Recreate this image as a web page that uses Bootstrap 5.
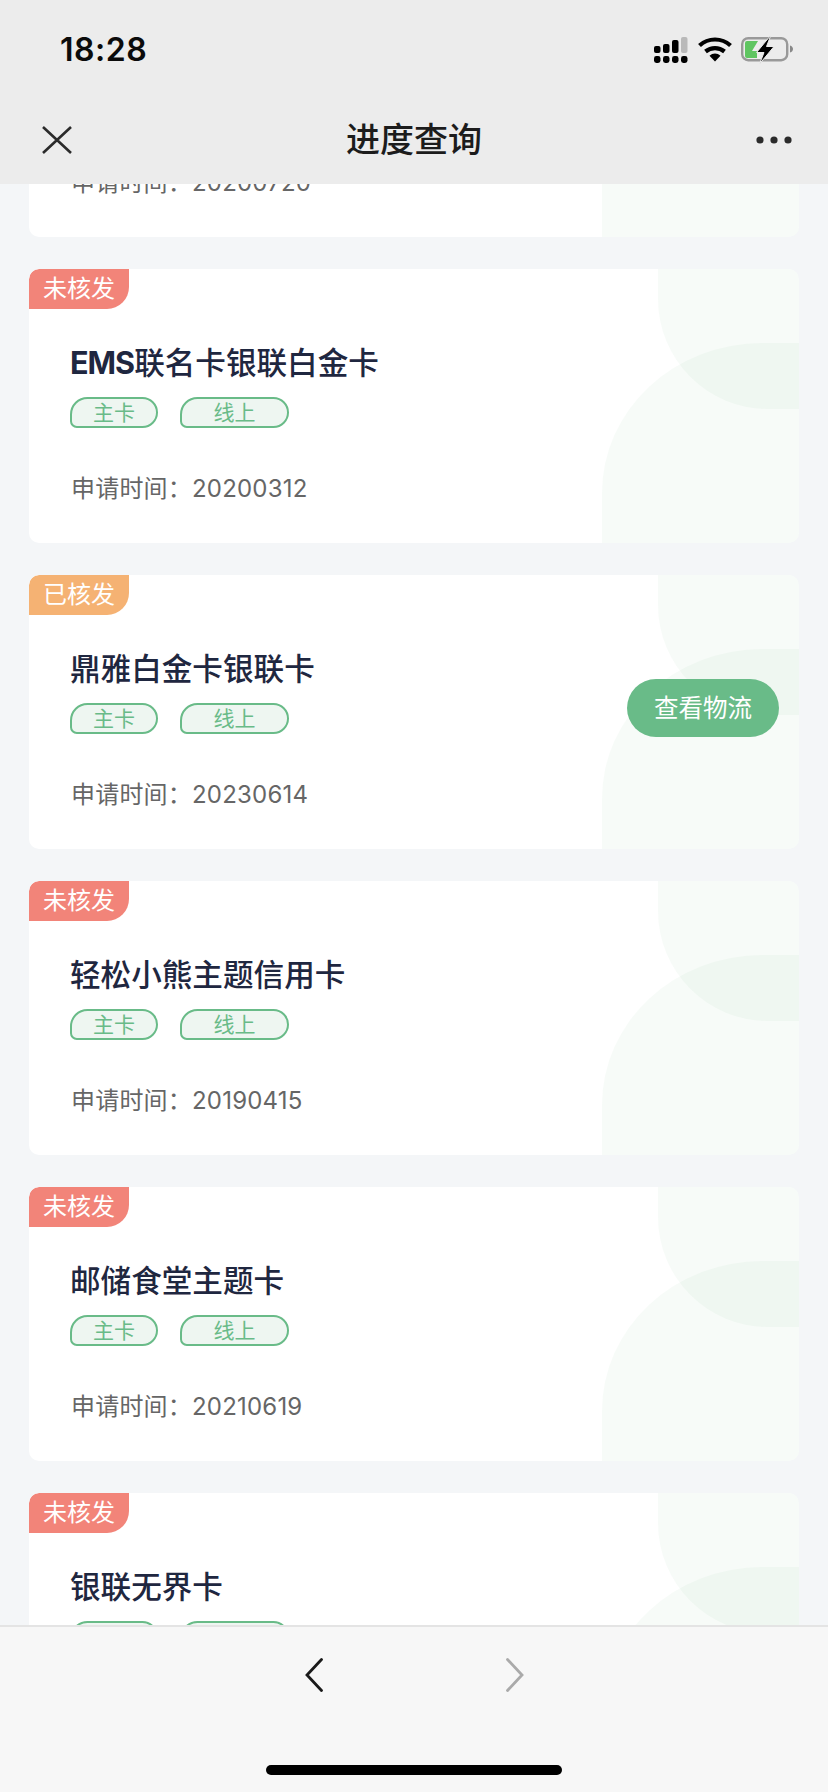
<!DOCTYPE html>
<html lang="zh-CN">
<head>
  <meta charset="UTF-8" />
  <meta name="viewport" content="width=device-width, initial-scale=1" />
  <title>进度查询</title>
  <link href="https://cdn.jsdelivr.net/npm/bootstrap@5.3.2/dist/css/bootstrap.min.css" rel="stylesheet" />
  <style>
    html, body { height: 100%; }
    body {
      font-family: Inter, "Noto Sans CJK SC", sans-serif;
      background-color: #f4f6f8;
      overflow: hidden;
    }
    .phone-page { width: 828px; height: 1792px; }
    .top-head { background-color: #ececec; height: 184px; flex: none; position: relative; z-index: 2; }
    .status-row { height: 100px; padding: 0 34px 0 60px; }
    .status-time { font-size: 32px; font-weight: 600; color: #0b0b0b; letter-spacing: .5px; margin-top: -1px; }
    .nav-row { height: 84px; padding: 0 36px 4px 42px; }
    .nav-title { font-size: 34px; font-weight: 500; color: #1c1c1c; line-height: 1; }
    .scroll-area { min-height: 0; overflow: hidden; }
    .card-list { margin: -221px 29px 0; gap: 32px; }
    .apply-card {
      height: 274px; flex: none;
      border: 0; border-radius: 10px;
      overflow: hidden;
    }
    .apply-card::before, .apply-card::after {
      content: ""; position: absolute; right: 0;
      background-color: rgba(105, 187, 136, .055);
    }
    .apply-card::before { top: 0; width: 141px; height: 140px; border-bottom-left-radius: 110px; }
    .apply-card::after { bottom: 0; width: 197px; height: 200px; border-top-left-radius: 160px 150px; }
    .state-tag {
      width: 100px; height: 40px; z-index: 1;
      font-size: 24px; line-height: 40px; text-align: center; color: #fff;
      border-radius: 10px 0 22px 0;
    }
    .state-no { background-color: #f28479; }
    .state-yes { background-color: #f5b273; }
    .apply-body { height: 100%; padding: 0 20px 8px 41px; position: relative; z-index: 1; }
    .apply-info { padding-top: 44px; }
    .apply-name { font-size: 30.6px; font-weight: 500; line-height: 40px; color: #1f2740; margin: 0 0 14px; }
    .apply-name b { font-weight: 700; letter-spacing: -1px; }
    .type-tag {
      height: 31px; font-size: 21px; line-height: 27px; color: #69bb88;
      background-color: #eef6f1; border: 2px solid #69bb88;
      border-radius: 18px 16px 16px 7px;
    }
    .type-main { width: 88px; text-align: center; }
    .type-online { width: 109px; text-align: center; margin-left: 22px; }
    .apply-date { font-size: 24px; line-height: 32px; color: #666; margin: 45px 0 0 1px; letter-spacing: .2px; }
    .btn-track {
      width: 152px; height: 58px; padding: 0;
      border: 0; border-radius: 29px;
      background-color: #69bb88; color: #fff;
      font-size: 24.5px; line-height: 58px; flex: none;
    }
    .foot-bar { height: 167px; flex: none; background-color: #f7f7f7; border-top: 2px solid #e4e4e4; position: relative; z-index: 2; }
    .foot-nav { padding-top: 31px; gap: 183px; }
    .home-line { width: 296px; height: 10px; border-radius: 5px; background-color: #000; margin: 73px auto 0; }
  </style>
</head>
<body>
<div class="phone-page d-flex flex-column">
  <header class="top-head">
    <div class="status-row d-flex align-items-center justify-content-between">
      <div class="status-time">18:28</div>
      <svg width="140" height="30" viewBox="0 0 140 30">
        <g fill="#000">
          <rect x="0" y="11" width="6.5" height="7" rx="2" />
          <rect x="9" y="9" width="6.5" height="9" rx="2" />
          <rect x="18" y="5" width="6.5" height="13" rx="2" />
          <rect x="0" y="21" width="6.5" height="7" rx="2.4" />
          <rect x="9" y="21" width="6.5" height="7" rx="2.4" />
          <rect x="18" y="21" width="6.5" height="7" rx="2.4" />
          <rect x="27" y="21" width="6.5" height="7" rx="2.4" />
        </g>
        <rect x="27" y="2" width="6.5" height="16" rx="2" fill="#b9b9b9" />
        <g fill="none" stroke="#000" stroke-width="4.2">
          <path d="M45.500 10.500a23 23 0 0 1 31 0" />
          <path d="M51.500 16.500a15 15 0 0 1 19 0" />
        </g>
        <path d="M61 26.500l-5.500-5.800a8 8 0 0 1 11 0z" fill="#000" />
        <rect x="88.200" y="3.200" width="45" height="22" rx="6" fill="none" stroke="#999" stroke-width="2.400" />
        <path d="M136 10.500c2 .5 3 2 3 3.500s-1 3-3 3.500z" fill="#888" />
        <path d="M91 8a2 2 0 0 1 2-2h11l-6 10h5v7H93a2 2 0 0 1-2-2z" fill="#5fc561" />
        <path d="M117 0L102.500 17.500h7.500L105.500 29 120 11.500h-7.500z" fill="#000" stroke="#ececec" stroke-width="1" />
      </svg>
    </div>
    <div class="nav-row d-flex align-items-center justify-content-between">
      <svg width="30" height="28" viewBox="0 0 30 28"><path d="M1 1l28 26M29 1L1 27" fill="none" stroke="#2b2b2b" stroke-width="2.6" /></svg>
      <div class="nav-title">进度查询</div>
      <svg width="36" height="8" viewBox="0 0 36 8" fill="#2b2b2b"><circle cx="4" cy="4" r="3.6" /><circle cx="18" cy="4" r="3.6" /><circle cx="32" cy="4" r="3.6" /></svg>
    </div>
  </header>

  <main class="scroll-area flex-grow-1">
    <div class="card-list d-flex flex-column">
      <div class="card apply-card position-relative">
        <div class="state-tag state-yes position-absolute top-0 start-0">已核发</div>
        <div class="apply-body d-flex align-items-center">
          <div class="apply-info">
            <h5 class="apply-name">汇丰银联白金卡</h5>
            <div class="d-flex"><div class="type-tag type-main">主卡</div><div class="type-tag type-online">线上</div></div>
            <p class="apply-date">申请时间：20200720</p>
          </div>
        </div>
      </div>

      <div class="card apply-card position-relative">
        <div class="state-tag state-no position-absolute top-0 start-0">未核发</div>
        <div class="apply-body d-flex align-items-center">
          <div class="apply-info">
            <h5 class="apply-name"><b>EMS</b>联名卡银联白金卡</h5>
            <div class="d-flex"><div class="type-tag type-main">主卡</div><div class="type-tag type-online">线上</div></div>
            <p class="apply-date">申请时间：20200312</p>
          </div>
        </div>
      </div>

      <div class="card apply-card position-relative">
        <div class="state-tag state-yes position-absolute top-0 start-0">已核发</div>
        <div class="apply-body d-flex align-items-center justify-content-between">
          <div class="apply-info">
            <h5 class="apply-name">鼎雅白金卡银联卡</h5>
            <div class="d-flex"><div class="type-tag type-main">主卡</div><div class="type-tag type-online">线上</div></div>
            <p class="apply-date">申请时间：20230614</p>
          </div>
          <button type="button" class="btn btn-track">查看物流</button>
        </div>
      </div>

      <div class="card apply-card position-relative">
        <div class="state-tag state-no position-absolute top-0 start-0">未核发</div>
        <div class="apply-body d-flex align-items-center">
          <div class="apply-info">
            <h5 class="apply-name">轻松小熊主题信用卡</h5>
            <div class="d-flex"><div class="type-tag type-main">主卡</div><div class="type-tag type-online">线上</div></div>
            <p class="apply-date">申请时间：20190415</p>
          </div>
        </div>
      </div>

      <div class="card apply-card position-relative">
        <div class="state-tag state-no position-absolute top-0 start-0">未核发</div>
        <div class="apply-body d-flex align-items-center">
          <div class="apply-info">
            <h5 class="apply-name">邮储食堂主题卡</h5>
            <div class="d-flex"><div class="type-tag type-main">主卡</div><div class="type-tag type-online">线上</div></div>
            <p class="apply-date">申请时间：20210619</p>
          </div>
        </div>
      </div>

      <div class="card apply-card position-relative">
        <div class="state-tag state-no position-absolute top-0 start-0">未核发</div>
        <div class="apply-body d-flex align-items-center">
          <div class="apply-info">
            <h5 class="apply-name">银联无界卡</h5>
            <div class="d-flex"><div class="type-tag type-main">主卡</div><div class="type-tag type-online">线上</div></div>
            <p class="apply-date">申请时间：20220101</p>
          </div>
        </div>
      </div>
    </div>
  </main>

  <footer class="foot-bar">
    <div class="foot-nav d-flex justify-content-center">
      <svg width="18" height="34" viewBox="0 0 18 34"><path d="M16.5 1.5L2 17l14.5 15.5" fill="none" stroke="#1a1a1a" stroke-width="2.8" stroke-linecap="round" /></svg>
      <svg width="18" height="34" viewBox="0 0 18 34"><path d="M1.5 1.5L16 17 1.5 32.5" fill="none" stroke="#aaa" stroke-width="2.8" stroke-linecap="round" /></svg>
    </div>
    <div class="home-line"></div>
  </footer>
</div>
<script src="https://cdn.jsdelivr.net/npm/bootstrap@5.3.2/dist/js/bootstrap.bundle.min.js"></script>
</body>
</html>
